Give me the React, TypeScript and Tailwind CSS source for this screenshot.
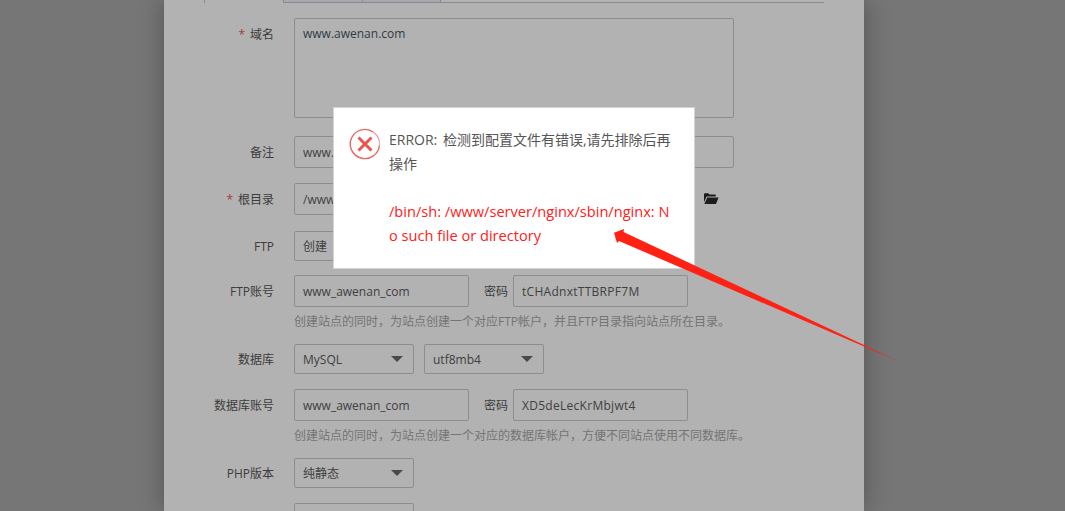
const cjk = "font-['Open_Sans','Noto_Sans_CJK_SC',sans-serif]";

function Label({ text, required }: { text: string; required?: boolean }) {
  return (
    <div className="w-[110px] shrink-0 pt-[2px] text-right text-[12px] text-[#3c3c3c]">
      {required && <span className="text-[#a83a3a] mr-[5px]">*</span>}
      {text}
    </div>
  );
}

function Input({ value, w }: { value: string; w: string }) {
  return (
    <div className={"h-[32px] flex items-center pt-[2px] px-[8px] border border-[#8d8d8d] rounded-[2px] text-[12px] text-[#404040] whitespace-nowrap overflow-hidden " + w}>
      {value}
    </div>
  );
}

function Select({ value, w }: { value: string; w: string }) {
  return (
    <div className={"h-[30px] flex items-center justify-between pl-[8px] pr-[10px] border border-[#8d8d8d] rounded-[2px] text-[12px] text-[#404040] " + w}>
      <span className="pt-[2px]">{value}</span>
      <span className="w-0 h-0 border-l-[6px] border-r-[6px] border-t-[6px] border-l-transparent border-r-transparent border-t-[#4a4a4a]" />
    </div>
  );
}

function Row({ label, required, mt, children }: { label: string; required?: boolean; mt: string; children: React.ReactNode }) {
  return (
    <div className={"flex items-center " + mt}>
      <Label text={label} required={required} />
      <div className="ml-[20px] flex items-center">{children}</div>
    </div>
  );
}

function Hint({ text }: { text: string }) {
  return <div className="ml-[130px] mt-[7px] h-[15px] leading-[15px] text-[12px] text-[#747474] whitespace-nowrap">{text}</div>;
}

function Password({ value }: { value: string }) {
  return (
    <>
      <span className="ml-[15px] mr-[5px] pt-[2px] text-[12px] text-[#3c3c3c]">密码</span>
      <Input value={value} w="w-[175px] tracking-[0.28px]" />
    </>
  );
}

export default function App() {
  return (
    <div className={"relative w-[1065px] h-[511px] overflow-hidden bg-[#767676] " + cjk}>
      <div className="ml-[164px] w-[700px] h-[511px] bg-[#b2b2b2] overflow-hidden shadow-[0_0_24px_rgba(0,0,0,0.3)]">
        {/* tabs */}
        <div className="ml-[40px] w-[620px] h-[3px] flex">
          <div className="w-[79px] border-l border-[#8a8a92]" />
          <div className="w-[79px] border-l border-b border-[#8a8a92] bg-[#a8a8ae]" />
          <div className="w-[79px] border-x border-b border-[#8a8a92] bg-[#a8a8ae]" />
          <div className="flex-1 border-b border-[#8a8a92]" />
        </div>

        <div className="flex mt-[15px]">
          <div className="w-[110px] pt-[8px] text-right text-[12px] text-[#3c3c3c]">
            <span className="text-[#a83a3a] mr-[5px]">*</span>域名
          </div>
          <div className="ml-[20px] w-[440px] h-[100px] border border-[#8d8d8d] rounded-[2px] px-[8px] py-[7px] text-[12px] leading-[16px] text-[#2f3a45]">
            www.awenan.com
          </div>
        </div>

        <Row label="备注" mt="mt-[18px]">
          <Input value="www." w="w-[440px]" />
        </Row>

        <Row label="根目录" required mt="mt-[15px]">
          <Input value="/www" w="w-[400px]" />
          <svg className="ml-[9px]" width="16" height="14" viewBox="0 0 16 14">
            <path d="M1 2.2 Q1 1.2 2 1.2 H5.2 L6.6 2.6 H12 Q12.8 2.6 12.8 3.4 V4.6 H3.6 L1 10.2 Z" fill="#1d1d1d" />
            <path d="M4.2 5.6 H15.6 L13 12 H1.4 Z" fill="#1d1d1d" />
          </svg>
        </Row>

        <Row label="FTP" mt="mt-[16px]">
          <Select value="创建" w="w-[120px]" />
        </Row>

        <Row label="FTP账号" mt="mt-[14px]">
          <Input value="www_awenan_com" w="w-[175px]" />
          <Password value="tCHAdnxtTTBRPF7M" />
        </Row>
        <Hint text="创建站点的同时，为站点创建一个对应FTP帐户，并且FTP目录指向站点所在目录。" />

        <Row label="数据库" mt="mt-[15px]">
          <Select value="MySQL" w="w-[120px]" />
          <div className="w-[10px]" />
          <Select value="utf8mb4" w="w-[120px]" />
        </Row>

        <Row label="数据库账号" mt="mt-[15px]">
          <Input value="www_awenan_com" w="w-[175px]" />
          <Password value="XD5deLecKrMbjwt4" />
        </Row>
        <Hint text="创建站点的同时，为站点创建一个对应的数据库帐户，方便不同站点使用不同数据库。" />

        <Row label="PHP版本" mt="mt-[15px]">
          <Select value="纯静态" w="w-[120px]" />
        </Row>

        <div className="ml-[130px] mt-[15px] w-[120px] h-[30px] border border-[#8d8d8d] rounded-[2px]" />
      </div>

      {/* error dialog */}
      <div className="absolute left-[333px] top-[107px] w-[362px] h-[162px] bg-white border border-[#d4d4d4] flex pl-[15px] pt-[20px]">
        <svg className="shrink-0" width="32" height="32" viewBox="0 0 32 32" fill="none">
          <path d="M24.5 4.2 A14.6 14.6 0 1 0 30.4 17.5" stroke="#e8675f" strokeWidth="1.4" />
          <path d="M30.4 17.5 A14.6 14.6 0 0 0 24.5 4.2" stroke="#ec9d97" strokeWidth="1.1" />
          <path d="M9.5 9.5 L22.5 22.5 M22.5 9.5 L9.5 22.5" stroke="#e9564e" strokeWidth="3" />
        </svg>
        <div className="ml-[8px] w-[285px] text-[14px] leading-[24px] text-[#555555] break-all">
          <div className="[word-spacing:2px]">ERROR: 检测到配置文件有错误,请先排除后再操作</div>
          <div className="mt-[23px] text-[14.6px] text-[#ff2020]">/bin/sh: /www/server/nginx/sbin/nginx: No such file or directory</div>
        </div>
      </div>

      {/* red annotation arrow */}
      <svg className="absolute left-0 top-0 pointer-events-none" width="1065" height="511" viewBox="0 0 1065 511">
        <path d="M614 232.7 L624 229 L623.5 232 L900 362 L619 241 L617 243 Z" fill="#ff2214" />
      </svg>
    </div>
  );
}
